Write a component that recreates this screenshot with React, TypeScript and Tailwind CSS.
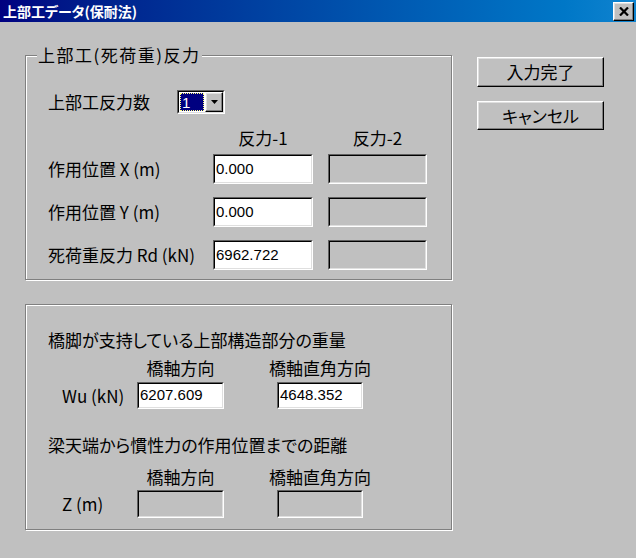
import React from 'react'

const raised =
  'border border-t-white border-l-white border-r-black border-b-black bg-[#c0c0c0] shadow-[inset_-1px_-1px_0_#808080,inset_1px_1px_0_#dfdfdf]'

const etched = 'relative border border-[#808080] shadow-[inset_1px_1px_0_#fff,1px_1px_0_#fff]'

function Field({ className, value, disabled }: { className: string; value?: string; disabled?: boolean }) {
  return (
    <div className={`${className} border border-t-[#606060] border-l-[#606060] border-r-white border-b-white`}>
      <div
        className={`flex h-full w-full items-center border border-t-black border-l-black border-r-[#dfdfdf] border-b-[#dfdfdf] pb-[2px] pl-[1px] font-['Liberation_Sans',Arial,sans-serif] text-[15px] leading-none text-black ${
          disabled ? 'bg-[#c0c0c0]' : 'bg-white'
        }`}
      >
        {value}
      </div>
    </div>
  )
}

function Header({ className, children }: { className: string; children: React.ReactNode }) {
  return <div className={`${className} flex justify-center whitespace-nowrap`}>{children}</div>
}

const rows = [
  { label: '作用位置 X (m)', value: '0.000' },
  { label: '作用位置 Y (m)', value: '0.000' },
  { label: '死荷重反力 Rd (kN)', value: '6962.722' },
]

export default function App() {
  return (
    <div className="h-[558px] w-[636px] overflow-hidden bg-[#c0c0c0] font-['Noto_Sans_CJK_JP',sans-serif] text-[17px] leading-[20px] text-black [font-feature-settings:'palt']">
      {/* title bar */}
      <div className="flex h-[22px] items-center justify-between bg-linear-to-r from-[#000080] to-[#1084d0] pl-[3px] pr-[2px]">
        <span className="text-[14px] font-bold leading-none text-white">上部工データ(保耐法)</span>
        <button className={`flex h-[19px] w-[21px] items-center justify-center ${raised}`}>
          <svg width="10" height="9" viewBox="0 0 10 9">
            <path d="M1 0.5 L9 8.5 M9 0.5 L1 8.5" stroke="black" strokeWidth="2.2" />
          </svg>
        </button>
      </div>

      <div className="flex pl-[25px] pt-[33px]">
        <div className="flex w-[427px] flex-col gap-[24px]">
          {/* group 1 */}
          <div className={`${etched} h-[225px]`}>
            <span className="absolute left-[11px] top-[-11px] bg-[#c0c0c0] px-[1px] tracking-[1.5px]">
              上部工(死荷重)反力
            </span>
            <div className="pl-[22px] pt-[34px]">
              <div className="flex h-[24px] items-center">
                <div className="w-[129px]">上部工反力数</div>
                <div className="h-[24px] w-[48px] border border-t-[#606060] border-l-[#606060] border-r-white border-b-white">
                  <div className="flex h-full w-full border border-t-black border-l-black border-r-[#dfdfdf] border-b-[#dfdfdf] bg-white">
                    <div className="flex-1 p-[1px]">
                      <div className="flex h-full items-center border border-dotted border-[#ffff80] bg-[#000080] pl-[1px] font-['Liberation_Sans',Arial,sans-serif] text-[15px] leading-none text-white">
                        1
                      </div>
                    </div>
                    <div className={`flex h-full w-[18px] items-center justify-center ${raised}`}>
                      <svg width="7" height="4" viewBox="0 0 7 4">
                        <path d="M0 0h7L3.5 4z" fill="black" />
                      </svg>
                    </div>
                  </div>
                </div>
              </div>

              <div className="mt-[14px] flex h-[20px] items-center">
                <div className="w-[165px]" />
                <Header className="w-[100px]">反力-1</Header>
                <Header className="ml-[15px] w-[99px]">反力-2</Header>
              </div>

              <div className="mt-[6px] flex flex-col gap-[13px]">
                {rows.map((r) => (
                  <div key={r.label} className="flex h-[30px] items-center">
                    <div className="w-[165px] whitespace-nowrap">{r.label}</div>
                    <Field className="h-[30px] w-[100px]" value={r.value} />
                    <Field className="ml-[15px] h-[30px] w-[99px]" disabled />
                  </div>
                ))}
              </div>
            </div>
          </div>

          {/* group 2 */}
          <div className={`${etched} h-[226px]`}>
            <div className="pl-[22px] pt-[25px]">
              <div className="h-[20px] whitespace-nowrap">橋脚が支持している上部構造部分の重量</div>
              <div className="mt-[8px] flex h-[20px] items-center">
                <div className="w-[89px]" />
                <Header className="w-[87px]">橋軸方向</Header>
                <Header className="ml-[53px] w-[86px]">橋軸直角方向</Header>
              </div>
              <div className="mt-[4px] flex h-[27px] items-center">
                <div className="ml-[14px] w-[75px] whitespace-nowrap">Wu (kN)</div>
                <Field className="h-[27px] w-[87px]" value="6207.609" />
                <Field className="ml-[53px] h-[27px] w-[86px]" value="4648.352" />
              </div>

              <div className="mt-[26px] h-[20px] whitespace-nowrap">梁天端から慣性力の作用位置までの距離</div>
              <div className="mt-[12px] flex h-[20px] items-center">
                <div className="w-[89px]" />
                <Header className="w-[87px]">橋軸方向</Header>
                <Header className="ml-[53px] w-[86px]">橋軸直角方向</Header>
              </div>
              <div className="mt-[3px] flex h-[28px] items-center">
                <div className="ml-[14px] w-[75px] whitespace-nowrap">Z (m)</div>
                <Field className="h-[28px] w-[87px]" disabled />
                <Field className="ml-[53px] h-[28px] w-[86px]" disabled />
              </div>
            </div>
          </div>
        </div>

        {/* buttons */}
        <div className="ml-[25px] flex flex-col gap-[14px] pt-[2px]">
          <button className={`h-[30px] w-[127px] ${raised}`}>入力完了</button>
          <button className={`h-[29px] w-[127px] ${raised}`}>キャンセル</button>
        </div>
      </div>
    </div>
  )
}
